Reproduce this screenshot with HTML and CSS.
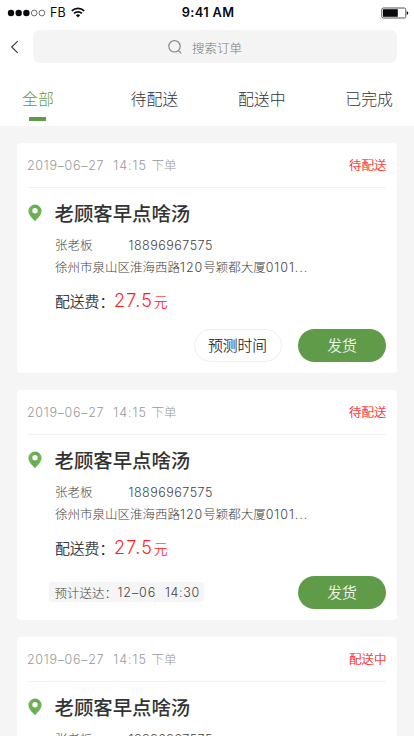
FILE: index.html
```html
<!DOCTYPE html>
<html lang="zh-CN">
<head>
<meta charset="utf-8">
<meta name="viewport" content="width=device-width, initial-scale=1">
<title>订单</title>
<link rel="stylesheet" href="styles.css">
</head>
<body>
<svg class="defs" width="0" height="0">
  <defs>
    <linearGradient id="pin-fill" x1="0" y1="0.2" x2="1" y2="0.6"><stop offset="0" stop-color="#76b95e"/><stop offset="0.5" stop-color="#65ab4e"/><stop offset="1" stop-color="#75b95b"/></linearGradient>
    <symbol id="pin" viewBox="0 0 14 18"><path fill="url(#pin-fill)" fill-rule="evenodd" d="M7 .5A6.6 6.6 0 0 0 .4 7.1C.4 11 4.2 14.2 7 17.3 9.8 14.2 13.6 11 13.6 7.1A6.6 6.6 0 0 0 7 .5ZM7 4a2.7 2.7 0 1 1 0 5.400A2.7 2.7 0 0 1 7 4Z"/></symbol>
  </defs>
</svg>
<header class="top">
  <div class="status">
    <div class="carrier">
      <svg width="39" height="8" viewBox="0 0 39 8"><g fill="#080a10"><circle cx="4" cy="4" r="3.200"/><circle cx="11.700" cy="4" r="3.200"/><circle cx="19.400" cy="4" r="3.200"/></g><g fill="none" stroke="#333" stroke-width=".7"><circle cx="27.200" cy="4" r="2.900"/><circle cx="34.900" cy="4" r="2.900"/></g></svg>
      <span class="fb">FB</span>
      <svg class="wifi" width="14" height="11" viewBox="0 0 14 11"><g fill="none" stroke="#080a10" stroke-width="1.700"><path d="M.8 3.900a9 9 0 0 1 12.400 0"/><path d="M3 6.400a5.800 5.800 0 0 1 8 0"/></g><path fill="#080a10" d="M7 10.400 4.900 8.200a3 3 0 0 1 4.200 0z"/></svg>
    </div>
    <div class="clock">9:41 AM</div>
    <svg class="battery" width="28" height="12" viewBox="0 0 28 12"><rect x=".8" y="1" width="24" height="10" rx="1.500" fill="#fff" stroke="#555" stroke-width="1"/><rect x="2" y="2.200" width="14.800" height="7.600" fill="#080a10"/><path d="M25.800 4.200q1.500.4 1.500 1.800t-1.500 1.800z" fill="#080a10"/></svg>
  </div>
  <div class="search-row">
    <svg class="back" width="9" height="14" viewBox="0 0 9 14"><path d="M7.700 1.200 1.700 7l6 5.800" fill="none" stroke="#333" stroke-width="1.100"/></svg>
    <div class="search">
      <svg width="14" height="14" viewBox="0 0 14 14"><g fill="none" stroke="#888" stroke-width="1.200"><circle cx="6.500" cy="6.300" r="5.700"/><path d="m10.300 10.500 2.900 2.900"/></g></svg>
      <span>搜索订单</span>
    </div>
  </div>
  <nav class="tabs">
    <span class="tab active">全部</span><span class="tab">待配送</span><span class="tab">配送中</span><span class="tab">已完成</span>
  </nav>
</header>
<main class="list">
  <article class="card">
    <div class="card-head"><span class="time"><span class="date">2019–06–27</span><span class="hour">14:15</span>下单</span><span class="state">待配送</span></div>
    <div class="title-row"><svg class="pin" width="14" height="18"><use href="#pin"/></svg><h2>老顾客早点啥汤</h2></div>
    <div class="contact"><span class="name">张老板</span><span class="phone">18896967575</span></div>
    <div class="address">徐州市泉山区淮海西路<span class="n">120</span>号颖都大厦<span class="n">0101...</span></div>
    <div class="fee"><span class="label">配送费：</span><span class="amount">27.5</span><span class="unit">元</span></div>
    <div class="actions"><span class="btn plain">预测时间</span><span class="btn primary">发货</span></div>
  </article>
  <article class="card">
    <div class="card-head"><span class="time"><span class="date">2019–06–27</span><span class="hour">14:15</span>下单</span><span class="state">待配送</span></div>
    <div class="title-row"><svg class="pin" width="14" height="18"><use href="#pin"/></svg><h2>老顾客早点啥汤</h2></div>
    <div class="contact"><span class="name">张老板</span><span class="phone">18896967575</span></div>
    <div class="address">徐州市泉山区淮海西路<span class="n">120</span>号颖都大厦<span class="n">0101...</span></div>
    <div class="fee"><span class="label">配送费：</span><span class="amount">27.5</span><span class="unit">元</span></div>
    <div class="actions"><span class="eta"><span class="eta-label">预计送达：</span><span class="eta-date">12–06</span><span class="eta-hour">14:30</span></span><span class="btn primary">发货</span></div>
  </article>
  <article class="card last">
    <div class="card-head"><span class="time"><span class="date">2019–06–27</span><span class="hour">14:15</span>下单</span><span class="state">配送中</span></div>
    <div class="title-row"><svg class="pin" width="14" height="18"><use href="#pin"/></svg><h2>老顾客早点啥汤</h2></div>
    <div class="contact"><span class="name">张老板</span><span class="phone">18896967575</span></div>
  </article>
</main>
</body>
</html>
```
FILE: styles.css
```css
* { box-sizing: border-box; }
body {
  margin: 0;
  height: 736px;
  overflow: hidden;
  background: #f5f5f5;
  color: #333;
  font-family: Inter, "Noto Sans CJK SC", sans-serif;
  font-weight: 300;
  font-size: 12.5px;
  white-space: nowrap;
}
svg { display: block; flex: none; }
.defs { position: absolute; }
.top { height: 126px; background: #fff; }
.status {
  display: grid;
  grid-template-columns: 1fr auto 1fr;
  align-items: center;
  height: 25px;
  padding: 0 5px 0 7px;
  color: #080a10;
}
.carrier { display: flex; align-items: center; }
.fb { margin-left: 4px; font-size: 12.5px; font-weight: 400; }
.wifi { margin-left: 5px; }
.clock { font-size: 12.8px; font-weight: 600; letter-spacing: 0.35px; }
.battery { justify-self: end; }
.search-row { display: flex; align-items: center; height: 43px; padding: 0 17px 0 10px; }
.back { margin-right: 14px; }
.search {
  flex: 1;
  display: flex;
  align-items: center;
  gap: 10px;
  height: 33px;
  padding: 1px 0 0 135px;
  border-radius: 7px;
  background: #f4f4f4;
  color: #777;
}
.tabs { display: flex; justify-content: space-between; padding: 20px 21px 0 22px; font-size: 15.9px; line-height: 24px; }
.tab { position: relative; }
.tab:first-child { margin-right: 17px; }
.active { color: #609b4a; }
.active::after {
  content: "";
  position: absolute;
  left: 7px;
  top: 29px;
  width: 17px;
  height: 4px;
  background: #609b4a;
}
.list { display: flex; flex-direction: column; gap: 17px; padding: 16.5px 17px 0; }
.card { flex: none; height: 230px; padding: 0 11px 0 10.5px; border-radius: 4px; background: #fff; }
.last { height: 120px; }
.card-head {
  display: flex;
  justify-content: space-between;
  align-items: center;
  height: 45px;
  border-bottom: 1px solid #f3f3f3;
}
.time { margin-left: -0.5px; color: #999; }
.date { margin-right: 9px; letter-spacing: 0.7px; }
.hour { margin-right: 4.5px; letter-spacing: 1px; }
.state { margin-right: -0.5px; color: #ff1616; -webkit-text-stroke: 0.2px #ff1616; }
.title-row { display: flex; align-items: center; height: 51px; }
.pin { margin-right: 13px; }
h2 { margin: 1.5px 0 0; font-size: 19.4px; line-height: 28px; font-weight: 500; color: #333; }
.contact, .address, .fee { padding-left: 27.5px; }
.contact { display: flex; height: 13px; line-height: 14px; color: #444; }
.name { width: 73.5px; }
.phone { letter-spacing: 0.5px; }
.address { height: 31px; line-height: 32px; color: #444; }
.n { letter-spacing: 0.95px; }
.fee { display: flex; align-items: center; height: 36px; color: #222; font-size: 14.8px; }
.label { width: 59px; -webkit-text-stroke: 0.2px #222; }
.amount { color: #ff1c1c; font-size: 18px; letter-spacing: 1.15px; }
.unit { margin-left: 1px; color: #ff1c1c; font-size: 13.5px; -webkit-text-stroke: 0.2px #ff1c1c; }
.actions { display: flex; justify-content: flex-end; align-items: center; gap: 16.5px; margin-top: 10px; }
.btn {
  width: 88px;
  height: 33px;
  border-radius: 17px;
  font-size: 14.8px;
  line-height: 34px;
  text-align: center;
}
.plain { border: 1px solid #eee; line-height: 32px; color: #222; -webkit-text-stroke: 0.15px #222; }
.primary { background: #609b4a; color: #fff; -webkit-text-stroke: 0.15px #fff; }
.eta {
  display: flex;
  align-items: center;
  width: 155px;
  height: 20px;
  margin: 0 auto 0 21.5px;
  padding-left: 5.5px;
  border-radius: 2px;
  background: #f5f5f5;
  color: #444;
}
.eta-label { width: 63px; }
.eta-date { margin-right: 9px; letter-spacing: 0.9px; }
.eta-hour { letter-spacing: 0.6px; }
```
